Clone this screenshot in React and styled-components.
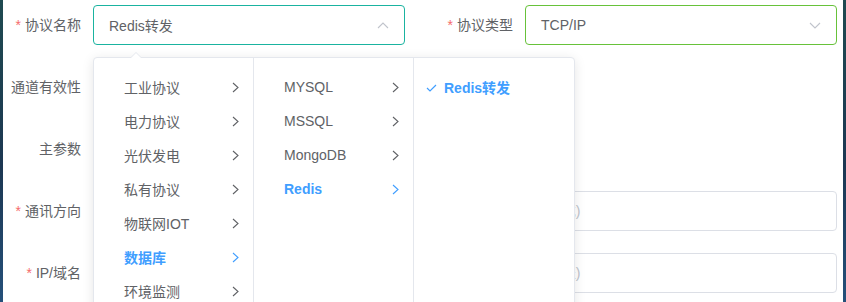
import styled, { createGlobalStyle } from "styled-components";

const GlobalStyle = createGlobalStyle`
  html, body {
    margin: 0;
    padding: 0;
  }
  body {
    background: linear-gradient(180deg, #1f4a50 0%, #1c3752 55%, #25507a 100%);
    font-family: "Liberation Sans", "Noto Sans CJK SC", sans-serif;
  }
`;

const Page = styled.div`
  position: relative;
  margin: 0 3px;
  height: 302px;
  box-sizing: border-box;
  padding: 5px 6px 0 0;
  background: #ffffff;
  overflow: hidden;
`;

const Row = styled.div`
  display: flex;
  height: 40px;
  margin-bottom: 22px;
`;

const FormItem = styled.div`
  display: flex;
  align-items: center;
  flex: ${(p) => (p.$grow ? "1" : "none")};
`;

const Label = styled.label`
  width: ${(p) => p.$width}px;
  box-sizing: border-box;
  padding-right: 12px;
  text-align: right;
  font-size: 14px;
  line-height: 40px;
  color: #606266;
  white-space: nowrap;
`;

const Star = styled.span`
  color: #f56c6c;
  margin-right: 4px;
`;

const SelectWrap = styled.div`
  position: relative;
  width: ${(p) => (p.$width ? `${p.$width}px` : "auto")};
  flex: ${(p) => (p.$width ? "none" : "1")};
`;

const SelectBox = styled.div`
  display: flex;
  align-items: center;
  justify-content: space-between;
  height: 40px;
  box-sizing: border-box;
  padding: 0 15px;
  border: 1px solid ${(p) => p.$border};
  border-radius: 4px;
  font-size: 14px;
  color: #606266;
`;

const Input = styled.input`
  flex: 1;
  height: 40px;
  box-sizing: border-box;
  padding: 0 15px;
  border: 1px solid #dcdfe6;
  border-radius: 4px;
  font-family: "Liberation Sans", "Noto Sans CJK SC", sans-serif;
  font-size: 14px;
  color: #606266;
  outline: none;
  background: #fff;

  &::placeholder {
    color: #c0c4cc;
  }
`;

const Popper = styled.div`
  position: absolute;
  left: 0;
  top: calc(100% + 12px);
  display: flex;
  height: 262px;
  background: #fff;
  border: 1px solid #e4e7ed;
  border-radius: 4px;
  box-shadow: 0 2px 12px 0 rgba(0, 0, 0, 0.1);
  z-index: 10;

  &::before,
  &::after {
    content: "";
    position: absolute;
    left: 36px;
    width: 0;
    height: 0;
    border: 6px solid transparent;
    border-top-width: 0;
  }
  &::before {
    top: -6px;
    border-bottom-color: #e4e7ed;
  }
  &::after {
    top: -5px;
    border-bottom-color: #fff;
  }
`;

const Menu = styled.ul`
  list-style: none;
  margin: 0;
  padding: 12px 0 0;
  width: 160px;
  box-sizing: border-box;
  border-right: ${(p) => (p.$last ? "none" : "1px solid #e4e7ed")};
`;

const MenuItem = styled.li`
  position: relative;
  display: flex;
  align-items: center;
  justify-content: space-between;
  height: 34px;
  padding: 0 14px 0 30px;
  font-size: 14px;
  color: ${(p) => (p.$active ? "#409eff" : "#606266")};
  font-weight: ${(p) => (p.$active ? 700 : 400)};
`;

const CheckMark = styled.svg`
  position: absolute;
  left: 12px;
  top: 14px;
`;

function ArrowIcon({ up }) {
  return (
    <svg width="12" height="7" viewBox="0 0 12 7">
      <polyline
        points={up ? "1,6 6,1 11,6" : "1,1 6,6 11,1"}
        fill="none"
        stroke="#c0c4cc"
        strokeWidth="1.1"
      />
    </svg>
  );
}

function Chevron() {
  return (
    <svg width="7" height="11" viewBox="0 0 7 11">
      <polyline points="1,1 6,5.5 1,10" fill="none" stroke="currentColor" strokeWidth="1.1" />
    </svg>
  );
}

const categories = ["工业协议", "电力协议", "光伏发电", "私有协议", "物联网IOT", "数据库", "环境监测"];
const databases = ["MYSQL", "MSSQL", "MongoDB", "Redis"];

function CascaderPanel() {
  return (
    <Popper>
      <Menu>
        {categories.map((c) => (
          <MenuItem key={c} $active={c === "数据库"}>
            {c}
            <Chevron />
          </MenuItem>
        ))}
      </Menu>
      <Menu>
        {databases.map((d) => (
          <MenuItem key={d} $active={d === "Redis"}>
            {d}
            <Chevron />
          </MenuItem>
        ))}
      </Menu>
      <Menu $last>
        <MenuItem $active>
          <CheckMark width="11" height="8" viewBox="0 0 11 8">
            <polyline points="1,4 4,7 10,1" fill="none" stroke="#409eff" strokeWidth="1.2" />
          </CheckMark>
          Redis转发
        </MenuItem>
      </Menu>
    </Popper>
  );
}

export default function App() {
  return (
    <>
      <GlobalStyle />
      <Page>
        <Row>
          <FormItem>
            <Label $width={90}>
              <Star>*</Star>协议名称
            </Label>
            <SelectWrap $width={312}>
              <SelectBox $border="#1ab3a0">
                Redis转发
                <ArrowIcon up />
              </SelectBox>
              <CascaderPanel />
            </SelectWrap>
          </FormItem>
          <FormItem $grow>
            <Label $width={120}>
              <Star>*</Star>协议类型
            </Label>
            <SelectWrap>
              <SelectBox $border="#67c23a">
                TCP/IP
                <ArrowIcon />
              </SelectBox>
            </SelectWrap>
          </FormItem>
        </Row>
        <Row>
          <FormItem>
            <Label $width={90}>通道有效性</Label>
          </FormItem>
        </Row>
        <Row>
          <FormItem>
            <Label $width={90}>主参数</Label>
          </FormItem>
        </Row>
        <Row>
          <FormItem $grow>
            <Label $width={90}>
              <Star>*</Star>通讯方向
            </Label>
            <Input readOnly placeholder="请输入设备通讯方向，支持上行、下行和双向三种模式(默认为双向通讯模式)" />
          </FormItem>
        </Row>
        <Row>
          <FormItem $grow>
            <Label $width={90}>
              <Star>*</Star>IP/域名
            </Label>
            <Input readOnly placeholder="请输入主机地址或者域名，支持两种常用网络地址格式(默认为本机回环地址)" />
          </FormItem>
        </Row>
      </Page>
    </>
  );
}
